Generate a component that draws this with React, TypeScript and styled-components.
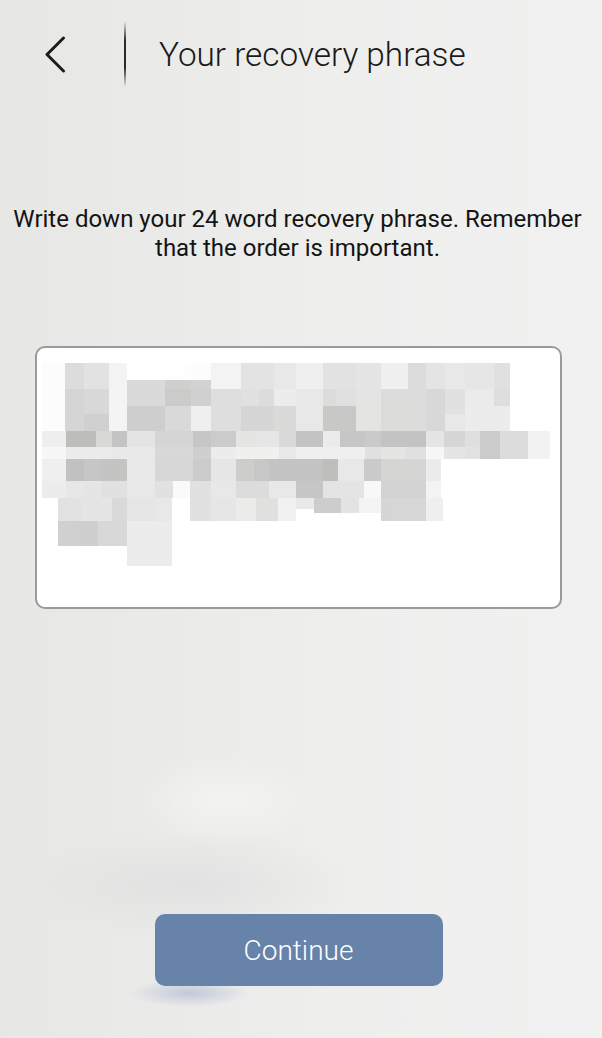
import React from "react";
import styled, { createGlobalStyle } from "styled-components";

const GlobalStyle = createGlobalStyle`
  html, body { margin: 0; padding: 0; }
  body { font-family: Roboto, "Noto Sans", Arial, sans-serif; }
  * { box-sizing: border-box; }
`;

const Screen = styled.div`
  position: relative;
  width: 602px;
  height: 1038px;
  overflow: hidden;
  display: flex;
  flex-direction: column;
  background:
    radial-gradient(ellipse 90px 45px at 225px 800px, rgba(247,247,245,0.7), rgba(247,247,245,0) 100%),
    radial-gradient(ellipse 170px 55px at 190px 885px, rgba(214,214,214,0.45), rgba(214,214,214,0) 100%),
    radial-gradient(ellipse 60px 14px at 190px 993px, rgba(120,135,185,0.35), rgba(120,135,185,0) 100%),
    linear-gradient(90deg, #e7e7e5 0%, #eaeae9 25%, #eeeeed 55%, #f1f1f1 100%);
`;

const Header = styled.header`
  height: 108px;
  display: flex;
  align-items: center;
  padding-left: 44px;
`;

const BackButton = styled.button`
  width: 22px;
  height: 38px;
  border: 0;
  padding: 0;
  background: transparent;
  display: flex;
  align-items: center;
  justify-content: center;
  cursor: pointer;
`;

const Divider = styled.div`
  width: 2px;
  height: 66px;
  margin-left: 58px;
  background: linear-gradient(180deg, rgba(40,40,40,0) 0%, #2a2a2a 30%, #2a2a2a 70%, rgba(40,40,40,0) 100%);
`;

const Title = styled.h1`
  margin: 0 0 0 33px;
  font-family: Roboto, sans-serif;
  font-weight: 300;
  font-size: 33.3px;
  color: #1a1a1a;
`;

const Intro = styled.p`
  margin: 97px 0 0;
  padding: 0 7px 0 0;
  text-align: center;
  font-family: Roboto, sans-serif;
  font-size: 24px;
  line-height: 29px;
  color: #141414;
  white-space: nowrap;
`;

const PhraseBox = styled.div`
  margin: 83px 0 0 35px;
  width: 527px;
  height: 263px;
  border: 2px solid #9a9a9a;
  border-radius: 10px;
  background: #ffffff;
  padding: 15px 0 0 5px;
`;

const Spacer = styled.div`
  flex: 1;
`;

const Footer = styled.div`
  display: flex;
  justify-content: center;
  padding: 0 5px 52px 0;
`;

const ContinueButton = styled.button`
  width: 288px;
  height: 72px;
  border: 0;
  border-radius: 10px;
  background: #6783a9;
  color: #ffffff;
  font-family: Roboto, sans-serif;
  font-size: 28px;
  font-weight: 300;
  cursor: pointer;
`;

type Band = [number, number, number[], string[]];

// mosaic of the blurred recovery phrase: [y1, y2, x boundaries, colors]
const bands: Band[] = [
  [364, 381, [42, 65, 84, 109, 127, 165, 191, 211, 241, 274, 296, 323, 356, 381, 408, 426, 445, 465, 494, 510],
    ["#fcfcfc", "#dcdcdc", "#e2e2e2", "#f3f3f3", "#ffffff", "#fefefe", "#fcfcfc", "#f3f3f3", "#e3e3e3", "#e8e8e8", "#efefef", "#e2e2e2", "#e5e5e5", "#f0f0f0", "#dcdcdc", "#e4e4e4", "#e8e8e8", "#e6e6e6", "#e0e0e0"]],
  [381, 390, [42, 65, 84, 109, 127, 165, 191, 211, 241, 274, 296, 323, 356, 381, 408, 426, 445, 465, 494, 510],
    ["#fcfcfc", "#dcdcdc", "#e2e2e2", "#f3f3f3", "#dadada", "#cfcfcd", "#d3d3d3", "#f3f3f3", "#e3e3e3", "#e8e8e8", "#efefef", "#e2e2e2", "#e5e5e5", "#f0f0f0", "#dcdcdc", "#e4e4e4", "#e8e8e8", "#e6e6e6", "#e0e0e0"]],
  [390, 407, [42, 65, 84, 109, 127, 165, 191, 211, 241, 259, 274, 296, 323, 336, 356, 381, 426, 445, 465, 494, 510],
    ["#fcfcfc", "#d5d5d5", "#d8d8d8", "#f4f4f4", "#dadada", "#cbcbc9", "#d0d0d0", "#dedede", "#e1e1e1", "#dcdcdc", "#ececec", "#e8e8e8", "#dcdcdb", "#e0e0e0", "#e4e4e2", "#dcdcdb", "#d8d8d8", "#e1e1e1", "#ebebeb", "#dedede"]],
  [407, 415, [42, 65, 84, 109, 127, 165, 191, 211, 241, 274, 296, 323, 356, 381, 426, 445, 465, 494, 510],
    ["#fcfcfc", "#d5d5d5", "#d8d8d8", "#f4f4f4", "#cecece", "#d9d9d9", "#efefef", "#dedede", "#d6d6d6", "#dadad9", "#e8e8e8", "#c8c8c6", "#e4e4e2", "#dcdcdb", "#d8d8d8", "#e1e1e1", "#ececec", "#ececec"]],
  [415, 432, [42, 65, 84, 109, 127, 165, 191, 211, 241, 274, 296, 323, 356, 381, 426, 445, 465, 494, 510],
    ["#fcfcfc", "#d5d5d5", "#d0d0d0", "#f4f4f4", "#cecece", "#d9d9d9", "#efefef", "#dedede", "#d6d6d6", "#dadad9", "#e8e8e8", "#c8c8c6", "#e4e4e2", "#dcdcdb", "#d8d8d8", "#e8e8e8", "#ececec", "#ececec"]],
  [432, 448, [42, 66, 96, 112, 127, 155, 193, 211, 236, 258, 279, 296, 323, 340, 365, 381, 405, 426, 444, 465, 480, 500, 528, 550],
    ["#eeeeee", "#bdbdbb", "#d8d8d6", "#c4c4c4", "#e4e4e4", "#d5d5d5", "#c6c6c6", "#cbcbcb", "#e5e5e3", "#e6e6e6", "#d9d9d9", "#c3c3c3", "#ebebeb", "#c6c6c6", "#cacaca", "#c3c3c3", "#c3c3c3", "#e5e5e5", "#d6d6d6", "#dfdfdf", "#cbcbcb", "#dcdcdc", "#f2f2f2"]],
  [448, 460, [42, 66, 112, 155, 193, 211, 236, 279, 296, 365, 381, 405, 426, 444, 465, 480, 500, 528, 550],
    ["#f7f7f7", "#ebebeb", "#e9e9e9", "#d8d8d8", "#cfcfcf", "#ececec", "#f0f0ef", "#e8e8e8", "#efefef", "#e0e0e0", "#e5e5e4", "#e0e0e0", "#f7f7f7", "#e5e5e5", "#e2e2e2", "#cbcbcb", "#dcdcdc", "#f2f2f2"]],
  [460, 482, [42, 66, 84, 101, 127, 155, 193, 211, 236, 254, 269, 296, 323, 338, 364, 381, 426, 441],
    ["#efefef", "#c1c1c1", "#c6c6c6", "#c4c4c3", "#e9e9e9", "#d7d7d7", "#cbcbcb", "#e6e6e6", "#cdcdcb", "#c7c7c7", "#c3c3c3", "#c3c3c3", "#bebebd", "#e8e8e8", "#cacaca", "#d5d5d3", "#ececec"]],
  [482, 499, [42, 66, 84, 101, 127, 155, 173, 190, 211, 236, 269, 296, 323, 364, 381, 426, 441],
    ["#ececec", "#e7e7e7", "#e5e5e5", "#e1e1e1", "#e8e8e8", "#e1e1e1", "#fafafa", "#e1e1e1", "#e8e8e8", "#dcdcdc", "#e8e8e8", "#c6c6c6", "#e4e4e4", "#f8f8f8", "#d3d3d3", "#f3f3f3"]],
  [499, 510, [58, 81, 112, 127, 155, 172, 190, 211, 236, 256, 278, 296, 314, 341, 359, 381, 399, 426, 443],
    ["#e2e2e2", "#e5e5e5", "#d9d9d9", "#e6e6e6", "#e8e8e8", "#ffffff", "#e1e1e1", "#e6e6e6", "#ebebe9", "#e0e0de", "#f1f1f1", "#e9e9e9", "#cdcdcd", "#e3e3e3", "#f4f4f4", "#d6d6d6", "#d7d7d7", "#efefef"]],
  [510, 514, [58, 81, 112, 127, 155, 172, 190, 211, 236, 256, 278, 296, 314, 341, 359, 381, 399, 426, 443],
    ["#e2e2e2", "#e5e5e5", "#d9d9d9", "#e6e6e6", "#e8e8e8", "#ffffff", "#e1e1e1", "#e6e6e6", "#ebebe9", "#e0e0de", "#f1f1f1", "#ffffff", "#cdcdcd", "#e3e3e3", "#f4f4f4", "#d6d6d6", "#d7d7d7", "#efefef"]],
  [514, 522, [58, 81, 112, 127, 155, 172, 190, 211, 236, 256, 278, 296, 381, 399, 426, 443],
    ["#e2e2e2", "#e5e5e5", "#d9d9d9", "#e6e6e6", "#e8e8e8", "#ffffff", "#e1e1e1", "#e6e6e6", "#ebebe9", "#e0e0de", "#f1f1f1", "#ffffff", "#d6d6d6", "#d7d7d7", "#efefef"]],
  [522, 547, [58, 75, 98, 127, 172], ["#d0d0d0", "#cfcfcf", "#d8d8d8", "#ececec"]],
  [547, 567, [127, 172], ["#ececec"]],
];

const OX = 42;
const OY = 364;

function Mosaic() {
  const rects: React.ReactElement[] = [];
  bands.forEach(([y1, y2, xs, colors], bi) => {
    colors.forEach((c, i) => {
      if (c === "#ffffff") return;
      rects.push(
        <rect
          key={`${bi}-${i}`}
          x={xs[i] - OX}
          y={y1 - OY}
          width={xs[i + 1] - xs[i]}
          height={y2 - y1}
          fill={c}
        />
      );
    });
  });
  return (
    <svg width="510" height="205" viewBox="0 0 510 205" shapeRendering="crispEdges" aria-hidden="true">
      {rects}
    </svg>
  );
}

export default function App() {
  return (
    <>
      <GlobalStyle />
      <Screen>
        <Header>
          <BackButton aria-label="Back">
            <svg width="22" height="38" viewBox="0 0 22 38" fill="none">
              <path d="M19.5 3 L3 19.5 L19.5 36" stroke="#1c1c1c" strokeWidth="3" strokeLinecap="round" strokeLinejoin="round" />
            </svg>
          </BackButton>
          <Divider />
          <Title>Your recovery phrase</Title>
        </Header>
        <Intro>
          Write down your 24 word recovery phrase. Remember
          <br />
          that the order is important.
        </Intro>
        <PhraseBox>
          <Mosaic />
        </PhraseBox>
        <Spacer />
        <Footer>
          <ContinueButton>Continue</ContinueButton>
        </Footer>
      </Screen>
    </>
  );
}
